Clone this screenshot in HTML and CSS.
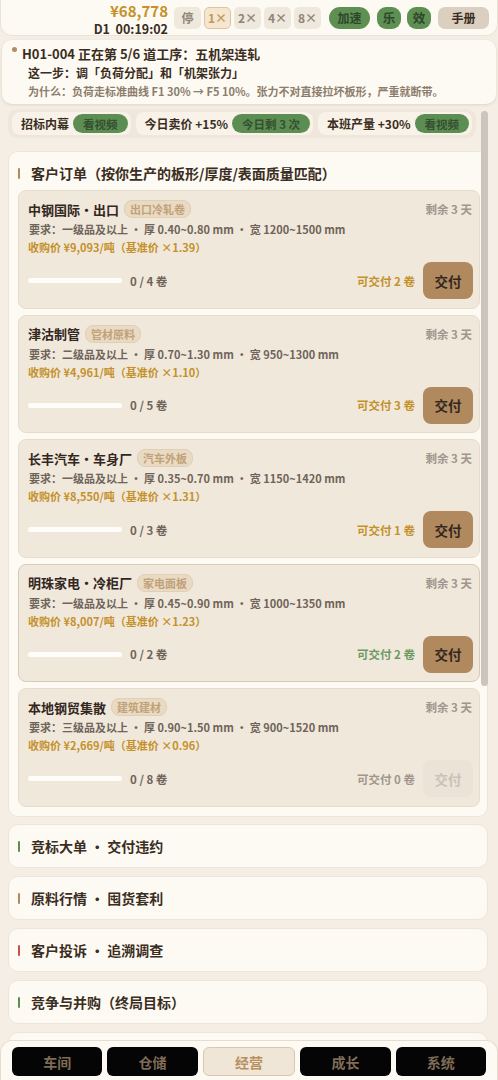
FILE: index.html
```html
<!DOCTYPE html>
<html lang="zh-CN">
<head>
  <meta charset="UTF-8">
  <meta name="viewport" content="width=device-width, initial-scale=1.0">
  <title>经营</title>
  <link rel="stylesheet" href="styles.css">
</head>
<body>
  <div class="app">
    <header class="topbar">
      <div class="clock">
        <div class="money">¥68,778</div>
        <div class="time">D1&nbsp; 00:19:02</div>
      </div>
      <div class="controls">
        <button class="ctl">停</button>
        <button class="ctl on">1×</button>
        <button class="ctl">2×</button>
        <button class="ctl">4×</button>
        <button class="ctl">8×</button>
        <button class="ctl green wide">加速</button>
        <button class="ctl green round">乐</button>
        <button class="ctl green round">效</button>
        <button class="ctl manual">手册</button>
      </div>
    </header>

    <section class="task">
      <div class="task-head"><span class="dot"></span>H01-004 正在第 5/6 道工序：五机架连轧</div>
      <div class="task-step">这一步：调「负荷分配」和「机架张力」</div>
      <div class="task-why">为什么：负荷走标准曲线 F1 30% → F5 10%。张力不对直接拉坏板形，严重就断带。</div>
    </section>

    <main class="scroller">
      <div class="buffs">
        <div class="buff">招标内幕<button class="pill">看视频</button></div>
        <div class="buff">今日卖价 +15%<button class="pill">今日剩 3 次</button></div>
        <div class="buff">本班产量 +30%<button class="pill">看视频</button></div>
      </div>

      <section class="panel orders">
        <h2 class="panel-title brown">客户订单（按你生产的板形/厚度/表面质量匹配）</h2>

        <div class="order">
          <div class="order-top">
            <span class="client">中钢国际・出口</span>
            <span class="tag">出口冷轧卷</span>
            <span class="left">剩余 3 天</span>
          </div>
          <div class="req">要求：一级品及以上 · 厚 0.40~0.80 mm · 宽 1200~1500 mm</div>
          <div class="price">收购价 ¥9,093/吨（基准价 ×1.39）</div>
          <div class="order-bottom">
            <div class="bar"></div>
            <span class="count">0 / 4 卷</span>
            <span class="can gold">可交付 2 卷</span>
            <button class="deliver">交付</button>
          </div>
        </div>

        <div class="order">
          <div class="order-top">
            <span class="client">津沽制管</span>
            <span class="tag">管材原料</span>
            <span class="left">剩余 3 天</span>
          </div>
          <div class="req">要求：二级品及以上 · 厚 0.70~1.30 mm · 宽 950~1300 mm</div>
          <div class="price">收购价 ¥4,961/吨（基准价 ×1.10）</div>
          <div class="order-bottom">
            <div class="bar"></div>
            <span class="count">0 / 5 卷</span>
            <span class="can gold">可交付 3 卷</span>
            <button class="deliver">交付</button>
          </div>
        </div>

        <div class="order">
          <div class="order-top">
            <span class="client">长丰汽车・车身厂</span>
            <span class="tag">汽车外板</span>
            <span class="left">剩余 3 天</span>
          </div>
          <div class="req">要求：一级品及以上 · 厚 0.35~0.70 mm · 宽 1150~1420 mm</div>
          <div class="price">收购价 ¥8,550/吨（基准价 ×1.31）</div>
          <div class="order-bottom">
            <div class="bar"></div>
            <span class="count">0 / 3 卷</span>
            <span class="can gold">可交付 1 卷</span>
            <button class="deliver">交付</button>
          </div>
        </div>

        <div class="order hot">
          <div class="order-top">
            <span class="client">明珠家电・冷柜厂</span>
            <span class="tag">家电面板</span>
            <span class="left">剩余 3 天</span>
          </div>
          <div class="req">要求：一级品及以上 · 厚 0.45~0.90 mm · 宽 1000~1350 mm</div>
          <div class="price">收购价 ¥8,007/吨（基准价 ×1.23）</div>
          <div class="order-bottom">
            <div class="bar"></div>
            <span class="count">0 / 2 卷</span>
            <span class="can green">可交付 2 卷</span>
            <button class="deliver">交付</button>
          </div>
        </div>

        <div class="order">
          <div class="order-top">
            <span class="client">本地钢贸集散</span>
            <span class="tag">建筑建材</span>
            <span class="left">剩余 3 天</span>
          </div>
          <div class="req">要求：三级品及以上 · 厚 0.90~1.50 mm · 宽 900~1520 mm</div>
          <div class="price">收购价 ¥2,669/吨（基准价 ×0.96）</div>
          <div class="order-bottom">
            <div class="bar"></div>
            <span class="count">0 / 8 卷</span>
            <span class="can grey">可交付 0 卷</span>
            <button class="deliver off">交付</button>
          </div>
        </div>
      </section>

      <section class="panel fold"><h2 class="panel-title green">竞标大单 · 交付违约</h2></section>
      <section class="panel fold"><h2 class="panel-title brown">原料行情 · 囤货套利</h2></section>
      <section class="panel fold"><h2 class="panel-title red">客户投诉 · 追溯调查</h2></section>
      <section class="panel fold"><h2 class="panel-title green">竞争与并购（终局目标）</h2></section>
      <section class="panel fold tail"></section>

      <div class="thumb"></div>
    </main>

    <nav class="tabs">
      <button class="tab">车间</button>
      <button class="tab">仓储</button>
      <button class="tab active">经营</button>
      <button class="tab">成长</button>
      <button class="tab">系统</button>
    </nav>
  </div>
</body>
</html>
```

FILE: styles.css
```css
* {
  box-sizing: border-box;
}
body {
  margin: 0;
  background: #f4eee5;
  font-family: "Noto Sans CJK SC", "Noto Sans", sans-serif;
  color: #3a2d22;
}
button {
  font-family: inherit;
  border: none;
  cursor: pointer;
  padding: 0;
}
.app {
  display: flex;
  flex-direction: column;
  height: 100vh;
  overflow: hidden;
}

/* top bar */
.topbar {
  height: 36px;
  flex-shrink: 0;
  display: flex;
  align-items: center;
  justify-content: flex-end;
  gap: 6px;
  padding: 0 8px;
  background: #fdfaf3;
  border: 1px solid #ebe3d7;
  border-top: none;
  border-radius: 0 0 12px 12px;
}
.clock {
  align-self: flex-start;
  padding-top: 1px;
  text-align: right;
  font-weight: 700;
  white-space: nowrap;
}
.money {
  color: #c4912b;
  font-size: 15px;
  line-height: 19px;
}
.time {
  font-size: 12.5px;
  line-height: 18px;
  color: #3a2d22;
}
.controls {
  display: flex;
  align-items: center;
  gap: 3px;
}
.ctl {
  height: 22px;
  width: 27px;
  border-radius: 5px;
  background: #efe8dd;
  color: #8f8478;
  font-size: 12px;
  font-weight: 700;
  white-space: nowrap;
}
.ctl.on {
  background: #f4e6cf;
  border: 1px solid #dcc6a0;
  color: #c09a5c;
}
.ctl.green {
  background: #5e8f53;
  color: #2f4629;
  margin-left: 3px;
}
.ctl.wide {
  width: 41px;
  border-radius: 11px;
  margin-left: 5px;
  margin-right: 1px;
}
.ctl.round {
  width: 24px;
  border-radius: 9px;
  font-size: 12.5px;
}
.ctl.manual {
  width: 51px;
  margin-left: 4px;
  background: #dbcfbf;
  color: #3a2c22;
  border-radius: 7px;
}

/* current task */
.task {
  flex-shrink: 0;
  margin: 4px 2px 0;
  padding: 5px 12px 6px 12px;
  height: 64px;
  background: #fdfaf3;
  border-radius: 10px;
  box-shadow: 0 1px 3px rgba(120, 100, 70, 0.18);
  font-weight: 700;
}
.task-head {
  display: flex;
  align-items: center;
  font-size: 13px;
  line-height: 17px;
}
.dot {
  width: 5px;
  height: 5px;
  border-radius: 50%;
  background: #b28c62;
  margin: -8px 5px 0 -2px;
}
.task-step {
  font-size: 12px;
  line-height: 20px;
  margin-top: 1px;
  padding-left: 14px;
}
.task-why {
  font-size: 11px;
  line-height: 16px;
  color: #8c7d6d;
  padding-left: 14px;
  white-space: nowrap;
}

/* scrolling body */
.scroller {
  flex: 1;
  position: relative;
  overflow: hidden;
  padding: 5px 10px 0 8px;
}
.thumb {
  position: absolute;
  top: 7px;
  right: 10px;
  width: 7px;
  height: 575px;
  border-radius: 4px;
  background: #cbc5bd;
}
.buffs {
  display: flex;
  width: max-content;
  gap: 5px;
  padding: 3px 4px;
  background: #efe7db;
  border-radius: 9px;
  margin-bottom: 13px;
}
.buff {
  display: flex;
  align-items: center;
  flex-shrink: 0;
  gap: 4px;
  height: 23px;
  padding: 0 3px 0 9px;
  background: #f8f2e8;
  border-radius: 8px;
  font-size: 12px;
  font-weight: 700;
  color: #3a2d22;
  white-space: nowrap;
}
.pill {
  height: 19px;
  padding: 0 10px;
  border-radius: 10px;
  background: #5c8d52;
  color: #34502f;
  font-size: 11.5px;
  font-weight: 700;
  white-space: nowrap;
}

.panel {
  background: #fdfaf3;
  border-radius: 10px;
  border: 1px solid #ede5d9;
  margin-bottom: 8px;
}
.panel-title {
  margin: 0;
  font-size: 14px;
  line-height: 20px;
  font-weight: 700;
  padding-left: 13px;
  position: relative;
  color: #3a2d22;
  white-space: nowrap;
}
.panel-title::before {
  content: "";
  position: absolute;
  left: 0;
  top: 5px;
  width: 2px;
  height: 11px;
  border-radius: 1px;
  background: #b08a60;
}
.panel-title.green::before {
  background: #5d8f52;
}
.panel-title.red::before {
  background: #c9504a;
}
.orders {
  padding: 11px 7px 9px 9px;
  margin-bottom: 7px;
}
.orders .panel-title {
  margin-bottom: 7px;
}
.fold {
  height: 44px;
  padding: 11px 9px;
}
.tail {
  height: 60px;
}

/* order cards */
.order {
  background: #f1e8dc;
  border: 1px solid #e6dccd;
  border-radius: 8px;
  padding: 8px 6px 8.5px 9px;
  margin-bottom: 6px;
}
.order:last-child {
  margin-bottom: 0;
}
.order.hot {
  border-color: #d6cbbb;
}
.order-top {
  display: flex;
  align-items: center;
  height: 20px;
}
.client {
  font-size: 13px;
  font-weight: 700;
  color: #33271e;
}
.tag {
  margin-left: 5px;
  padding: 0 5px;
  height: 18px;
  line-height: 16px;
  border-radius: 8px;
  background: #e9dac4;
  border: 1px solid #e1cfb5;
  color: #c1a178;
  font-size: 11px;
  font-weight: 700;
}
.left {
  margin-left: auto;
  font-size: 11.5px;
  font-weight: 700;
  color: #a0968c;
  padding-right: 1px;
}
.req {
  margin-top: 1px;
  font-size: 11px;
  line-height: 18px;
  font-weight: 700;
  color: #6f645a;
  padding-left: 1px;
  white-space: nowrap;
}
.price {
  font-size: 11px;
  line-height: 19px;
  font-weight: 700;
  color: #c4912b;
}
.order-bottom {
  display: flex;
  align-items: center;
  margin-top: 5px;
}
.bar {
  width: 94px;
  height: 5px;
  border-radius: 3px;
  background: #fffdf9;
}
.count {
  margin-left: 8px;
  font-size: 11.5px;
  font-weight: 700;
  color: #6f645a;
}
.can {
  margin-left: auto;
  margin-right: 8px;
  font-size: 11.5px;
  font-weight: 700;
}
.can.gold {
  color: #c4912b;
}
.can.green {
  color: #6b9b63;
}
.can.grey {
  color: #a0968c;
}
.deliver {
  width: 50px;
  height: 37px;
  border-radius: 8px;
  background: #b08a5e;
  color: #33271e;
  font-size: 13.5px;
  font-weight: 700;
}
.deliver.off {
  background: #ebe3d7;
  color: #cbc1b4;
}

/* bottom tabs */
.tabs {
  flex-shrink: 0;
  height: 40px;
  display: flex;
  gap: 5px;
  padding: 6px 11px 4px;
  background: #fdfaf3;
  border: 1px solid #e6ddd0;
  border-bottom: none;
  border-radius: 12px 12px 0 0;
}
.tab {
  flex: 1;
  height: 29px;
  border-radius: 6px;
  background: #050505;
  color: #7f6c57;
  font-size: 14px;
  font-weight: 700;
}
.tab.active {
  background: #efe6d8;
  border: 1px solid #d9c8ae;
  color: #b8905e;
}
```
